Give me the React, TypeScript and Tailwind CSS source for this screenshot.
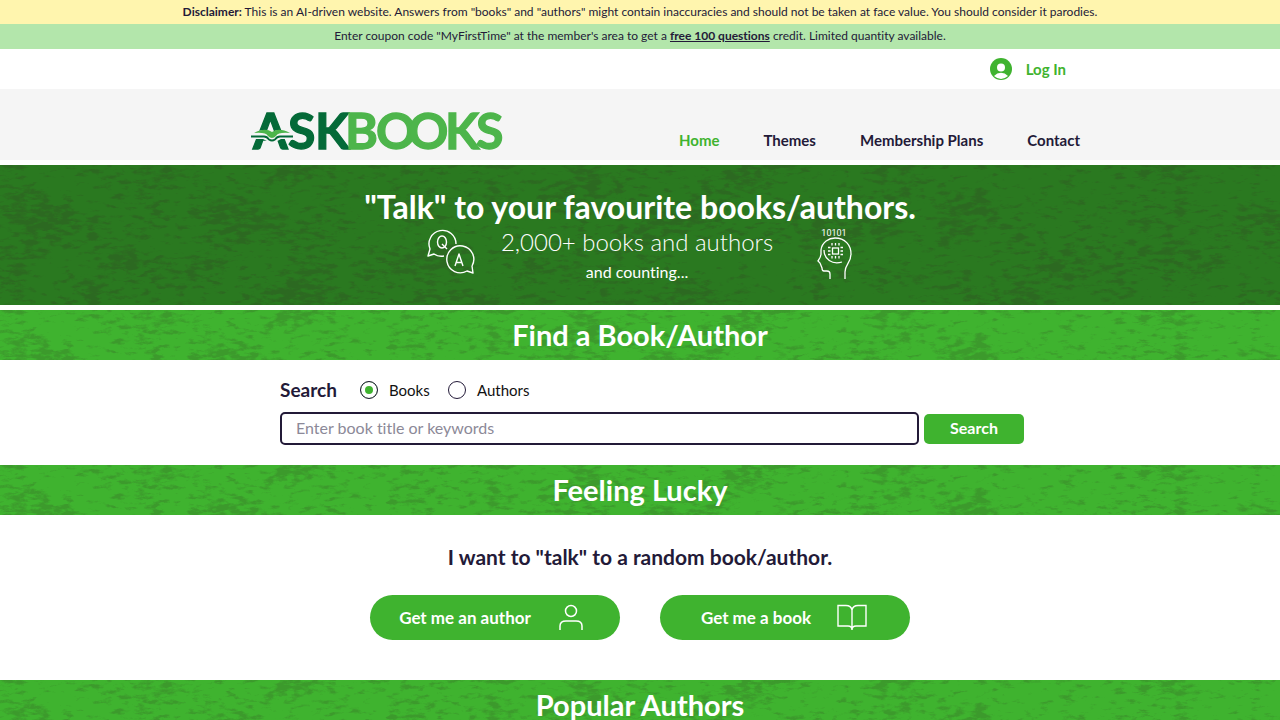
import { useState } from 'react'
import type { ReactNode } from 'react'

const NAV_LINKS = ['Home', 'Themes', 'Membership Plans', 'Contact']

// Rough, mottled stain that sits over the green bands
function Texture({ id, opacity }: { id: string; opacity: number }) {
  return (
    <svg className="absolute inset-0 w-full h-full" aria-hidden="true">
      <filter id={id} x="0" y="0" width="100%" height="100%" colorInterpolationFilters="sRGB">
        <feTurbulence type="fractalNoise" baseFrequency="0.015 0.025" numOctaves="2" seed="3" result="patches" />
        <feTurbulence type="fractalNoise" baseFrequency="0.08 0.2" numOctaves="5" seed="8" result="grain" />
        <feComposite in="grain" in2="patches" operator="arithmetic" k2="0.6" k3="0.4" />
        <feColorMatrix values="0 0 0 0 0.2  0 0 0 0 0.28  0 0 0 0 0.14  8 0 0 0 -4.1" />
      </filter>
      <rect width="100%" height="100%" filter={`url(#${id})`} opacity={opacity} />
    </svg>
  )
}

function SectionBand({ id, children }: { id: string; children: ReactNode }) {
  return (
    <div className="relative h-[50px] bg-[#3fb32f]">
      <Texture id={id} opacity={0.22} />
      <h2 className="relative text-center text-[29px] leading-[50px] font-bold text-white">{children}</h2>
    </div>
  )
}

function Logo() {
  return (
    <svg className="w-[260px] h-16" viewBox="0 -10 260 64" role="img" aria-label="AskBooks">
      <g fontFamily="Lato, sans-serif" fontWeight="700" fontSize="50" strokeWidth="1.3">
        <text y="38" x="3 38 65" fill="#046a38" stroke="#046a38">ASK</text>
        <text y="38" x="95 126 158 195 226" fill="#4db54b" stroke="#4db54b">BOOKS</text>
      </g>
      <path d="M0 24 Q12 16 22 21 Q32 16 44 24 V28 H31 Q26 31 22 32 Q18 31 13 28 H0Z" fill="#f5f5f5" />
      <path d="M4 22 Q15 16 22 21 Q29 16 40 22 Q28 21 26 25 Q22 29 18 25 Q16 21 4 22Z" fill="#4db54b" />
      <path d="M1 25.500 H14 Q17 25.500 19 28.500 Q22 30.500 25 28.500 Q27 25.500 30 25.500 H43" fill="none" stroke="#046a38" strokeWidth="1.8" />
    </svg>
  )
}

function QuestionAnswerIcon() {
  return (
    <svg className="w-12 h-12 mr-[26px]" viewBox="0 0 48 48" fill="none" stroke="white" strokeWidth="1.4" strokeLinejoin="round" aria-hidden="true">
      <path d="M17 28 Q11 29 7 26 L1 28 L3 21 A13.500 13.500 0 1 1 29 16" />
      <path d="M45 38 A13.500 13.500 0 1 0 40 43 L46 45 L45 38" />
      <ellipse cx="15" cy="14" rx="4.500" ry="6" />
      <path d="M15 16 L20 21 M28 38 L32 26 L36 38 M29 34.500 H35" />
    </svg>
  )
}

function ThinkingHeadIcon() {
  return (
    <svg className="w-[36px] h-[52px] ml-11" viewBox="0 0 36 52" fill="none" stroke="white" strokeWidth="1.3" aria-hidden="true">
      <text x="17" y="8" textAnchor="middle" fontSize="9" fontFamily="Roboto, sans-serif" fill="white" stroke="none">10101</text>
      <path d="M13 51 V46 Q13 43 10 43 H7 Q5 43 5 40 L3 35 L1 33 Q4 29 4 26 V22 C5 14 12 10 18 10 C28 10 34 17 34 26 C34 35 28 36 28 44 V51" />
      <path d="M7 22 C7 31 15 37 25 34" />
      <rect x="15.500" y="20" width="6" height="6" />
      <path d="M15 15 V17.500 M18.500 15 V17.500 M22 15 V17.500 M15 28 V30.500 M18.500 28 V30.500 M22 28 V30.500 M11 19.500 H13.500 M11 23 H13.500 M11 26.500 H13.500 M23.500 19.500 H26 M23.500 23 H26 M23.500 26.500 H26" />
    </svg>
  )
}

export default function App() {
  const [searchType, setSearchType] = useState('books')
  const [query, setQuery] = useState('')

  const radioClass =
    'appearance-none w-[18px] h-[18px] shrink-0 rounded-full border border-[#231a38] checked:bg-[#3fb32f] checked:shadow-[inset_0_0_0_4px_white]'

  return (
    <div className="bg-white text-[#231a38] font-['Lato',sans-serif] [font-variant-ligatures:none]">
      <p className="min-h-6 bg-[#fff5ae] text-center text-xs leading-6">
        <b>Disclaimer:</b> This is an AI-driven website. Answers from "books" and "authors" might contain inaccuracies and should not be taken at face value. You should consider it parodies.
      </p>
      <p className="min-h-[25px] bg-[#b3e6ab] text-center text-xs leading-6">
        Enter coupon code "MyFirstTime" at the member's area to get a{' '}
        <a href="#members" className="font-bold underline">free 100 questions</a> credit. Limited quantity available.
      </p>

      {/* Login */}
      <div className="h-10 max-w-[980px] mx-auto flex items-center justify-end pr-16">
        <button className="flex items-center gap-3.5 text-[15px] font-bold text-[#3fb32f]">
          <svg className="w-[22px] h-[22px]" viewBox="0 0 22 22" aria-hidden="true">
            <circle cx="11" cy="11" r="11" fill="#3fb32f" />
            <circle cx="11" cy="9.500" r="4" fill="white" />
            <path d="M4 18 Q7 14.800 11 14.800 Q15 14.800 18 18 Q11 24 4 18Z" fill="white" />
          </svg>
          Log In
        </button>
      </div>

      {/* Header */}
      <header className="h-[71px] bg-[#f5f5f5]">
        <div className="max-w-[980px] h-full mx-auto pl-[100px] pr-[50px] flex items-start justify-between">
          <a href="#" className="pt-3"><Logo /></a>
          <nav className="flex gap-11 pt-[39px] text-[15px] leading-6 font-bold whitespace-nowrap">
            {NAV_LINKS.map(link => (
              <a key={link} href="#" className={link === 'Home' ? 'text-[#3fb32f]' : ''}>{link}</a>
            ))}
          </nav>
        </div>
      </header>

      {/* Hero */}
      <section className="relative h-[140px] my-[5px] bg-[#2a7920] text-white">
        <Texture id="hero-texture" opacity={0.3} />
        <div className="relative pt-6 text-center">
          <h1 className="text-[32px] leading-9 font-bold">"Talk" to your favourite books/authors.</h1>
          <div className="pt-[3px] flex justify-center items-start">
            <QuestionAnswerIcon />
            <div>
              <p className="text-2xl leading-7 font-light">2,000+ books and authors</p>
              <p className="text-base leading-8">and counting...</p>
            </div>
            <ThinkingHeadIcon />
          </div>
        </div>
      </section>

      <SectionBand id="find-texture">Find a Book/Author</SectionBand>

      <form className="h-[105px] max-w-[980px] mx-auto pl-[130px] pr-[106px] pt-[18px]" onSubmit={e => e.preventDefault()}>
        <fieldset className="flex items-center h-6 text-[15px] text-[#111]">
          <legend className="float-left w-20 text-[19px] leading-[22px] font-bold text-[#231a38]">Search</legend>
          <label className="flex items-center gap-[11px] w-[88px]">
            <input
              type="radio"
              name="searchType"
              checked={searchType === 'books'}
              onChange={() => setSearchType('books')}
              className={radioClass}
            />
            Books
          </label>
          <label className="flex items-center gap-[11px]">
            <input
              type="radio"
              name="searchType"
              checked={searchType === 'authors'}
              onChange={() => setSearchType('authors')}
              className={radioClass}
            />
            Authors
          </label>
        </fieldset>
        <div className="flex items-center gap-[5px] pt-2.5">
          <input
            type="text"
            aria-label="Search term"
            placeholder="Enter book title or keywords"
            value={query}
            onChange={e => setQuery(e.target.value)}
            className="flex-1 min-w-0 h-[33px] px-3.5 pb-0.5 rounded-[5px] border-2 border-[#231a38] text-base placeholder:text-[#8c8998]"
          />
          <button className="w-[100px] h-[30px] pb-0.5 rounded-[5px] bg-[#3fb32f] text-base font-bold text-white">Search</button>
        </div>
      </form>

      <SectionBand id="lucky-texture">Feeling Lucky</SectionBand>

      <section className="h-[165px] pt-[30px]">
        <h3 className="text-center text-[21px] leading-6 font-bold">I want to "talk" to a random book/author.</h3>
        <div className="flex justify-center gap-10 pt-[26px]">
          <button className="flex items-center justify-center gap-7 w-[250px] h-[45px] pr-2 rounded-full bg-[#3fb32f] text-[17px] font-bold text-white">
            Get me an author
            <svg className="w-6 h-7" viewBox="0 0 24 28" fill="none" stroke="white" strokeWidth="1.5" aria-hidden="true">
              <circle cx="12" cy="7" r="5.500" />
              <path d="M1 26 V22 Q1 17 7 17 H17 Q23 17 23 22 V26" />
            </svg>
          </button>
          <button className="flex items-center justify-center gap-[26px] w-[250px] h-[45px] pr-0.5 rounded-full bg-[#3fb32f] text-[17px] font-bold text-white">
            Get me a book
            <svg className="w-[30px] h-7" viewBox="0 0 30 28" fill="none" stroke="white" strokeWidth="1.4" aria-hidden="true">
              <path d="M15 6 Q14 1.500 9 1.500 H1 V22 H11 Q15 22 15 26 Q15 22 19 22 H29 V1.500 H21 Q16 1.500 15 6 V26" />
            </svg>
          </button>
        </div>
      </section>

      <SectionBand id="popular-texture">Popular Authors</SectionBand>
    </div>
  )
}
